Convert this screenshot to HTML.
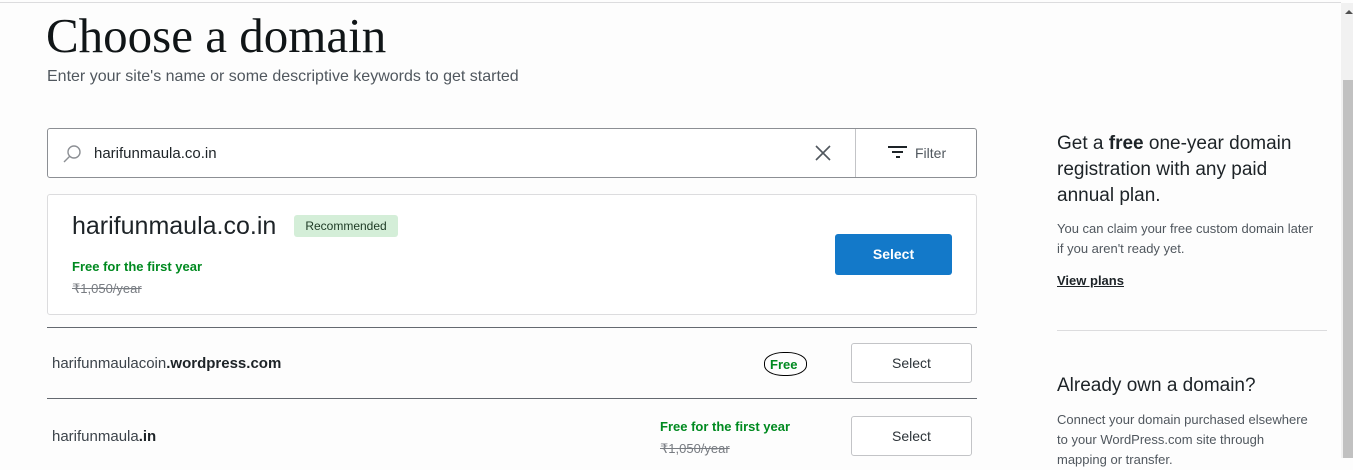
<!DOCTYPE html>
<html><head><style>
*{margin:0;padding:0;box-sizing:border-box}
body{width:1353px;height:458px;overflow:hidden;background:#fdfdfd;font-family:"Liberation Sans",sans-serif;color:#1d2327;position:relative}
.a{position:absolute;white-space:nowrap}
.btn{position:absolute;border:1px solid #c3c4c7;border-radius:3px;background:#fff;font-size:14px;color:#2c3338;text-align:center;line-height:38px;width:121px;height:40px}
.green{color:#008a20;font-weight:bold;font-size:13px}
.strike{color:#787c82;font-size:13px;text-decoration:line-through}
</style></head><body>
<div class="a" style="left:0;top:2px;width:1341px;height:1px;background:#dcdcde"></div>
<div class="a" style="left:1341px;top:3px;width:12px;height:455px;background:#f1f1f1"></div>
<div class="a" style="left:1343px;top:80px;width:10px;height:378px;background:#c1c1c1"></div>
<div class="a" style="left:1345px;top:10px;width:0;height:0;border-left:4px solid transparent;border-right:4px solid transparent;border-bottom:4px solid #505050"></div>

<div class="a" style="left:46px;top:7px;font-family:'Liberation Serif',serif;font-size:49px;color:#101517">Choose a domain</div>
<div class="a" style="left:47px;top:68px;font-size:16px;color:#50575e">Enter your site's name or some descriptive keywords to get started</div>

<div class="a" style="left:47px;top:128px;width:930px;height:50px;border:1px solid #8c8f94;border-radius:3px;background:#fff"></div>
<svg class="a" style="left:62px;top:143px" width="22" height="22" viewBox="0 0 22 22"><circle cx="12" cy="9" r="6" fill="none" stroke="#8c8f94" stroke-width="1.4"/><line x1="7.5" y1="13.5" x2="2" y2="19" stroke="#8c8f94" stroke-width="1.4"/></svg>
<div class="a" style="left:94px;top:145px;font-size:15px;color:#1d2327">harifunmaula.co.in</div>
<svg class="a" style="left:815px;top:145px" width="16" height="16"><path d="M1 1L15 15M15 1L1 15" stroke="#50575e" stroke-width="1.6"/></svg>
<div class="a" style="left:855px;top:129px;width:1px;height:48px;background:#c3c4c7"></div>
<svg class="a" style="left:888px;top:146px" width="20" height="14"><rect x="0" y="0" width="19" height="2" fill="#1d2327"/><rect x="4" y="5" width="11" height="2" fill="#1d2327"/><rect x="8" y="10" width="4" height="2" fill="#1d2327"/></svg>
<div class="a" style="left:915px;top:145px;font-size:14px;color:#50575e">Filter</div>

<div class="a" style="left:47px;top:194px;width:930px;height:121px;border:1px solid #dcdcde;border-radius:3px;background:#fff"></div>
<div class="a" style="left:72px;top:212px;font-size:25px;color:#1d2327">harifunmaula.co.in</div>
<div class="a" style="left:294px;top:215px;width:104px;height:22px;background:#d4eed8;border-radius:3px;font-size:12px;color:#1d3a24;text-align:center;line-height:22px">Recommended</div>
<div class="a green" style="left:72px;top:259px">Free for the first year</div>
<div class="a strike" style="left:72px;top:281px">₹1,050/year</div>
<div class="a" style="left:835px;top:234px;width:117px;height:41px;background:#1379c9;border-radius:3px;color:#fff;font-weight:bold;font-size:14px;text-align:center;line-height:41px">Select</div>

<div class="a" style="left:47px;top:327px;width:930px;height:1px;background:#646970"></div>
<div class="a" style="left:52px;top:355px;font-size:15px;color:#3c434a">harifunmaulacoin<b style="color:#1d2327">.wordpress.com</b></div>
<div class="a" style="left:764px;top:352px;width:43px;height:24px;border:1px solid #000;border-radius:45%"></div>
<div class="a green" style="left:770px;top:357px">Free</div>
<div class="btn" style="left:851px;top:343px">Select</div>
<div class="a" style="left:47px;top:398px;width:930px;height:1px;background:#646970"></div>
<div class="a" style="left:52px;top:428px;font-size:15px;color:#3c434a">harifunmaula<b style="color:#1d2327">.in</b></div>
<div class="a green" style="left:660px;top:419px">Free for the first year</div>
<div class="a strike" style="left:660px;top:441px">₹1,050/year</div>
<div class="btn" style="left:851px;top:416px">Select</div>

<div class="a" style="left:1057px;top:131px;font-size:19px;line-height:26px;color:#1d2327;white-space:normal;width:270px">Get a <b>free</b> one-year domain registration with any paid annual plan.</div>
<div class="a" style="left:1057px;top:219px;font-size:13px;line-height:20px;color:#50575e;white-space:normal;width:258px">You can claim your free custom domain later if you aren't ready yet.</div>
<div class="a" style="left:1057px;top:273px;font-size:13px;font-weight:bold;text-decoration:underline;color:#1d2327">View plans</div>
<div class="a" style="left:1057px;top:330px;width:270px;height:1px;background:#dcdcde"></div>
<div class="a" style="left:1057px;top:375px;font-size:19px;color:#1d2327">Already own a domain?</div>
<div class="a" style="left:1057px;top:410px;font-size:13px;line-height:20px;color:#50575e">Connect your domain purchased elsewhere<br>to your WordPress.com site through<br>mapping or transfer.</div>
</body></html>
